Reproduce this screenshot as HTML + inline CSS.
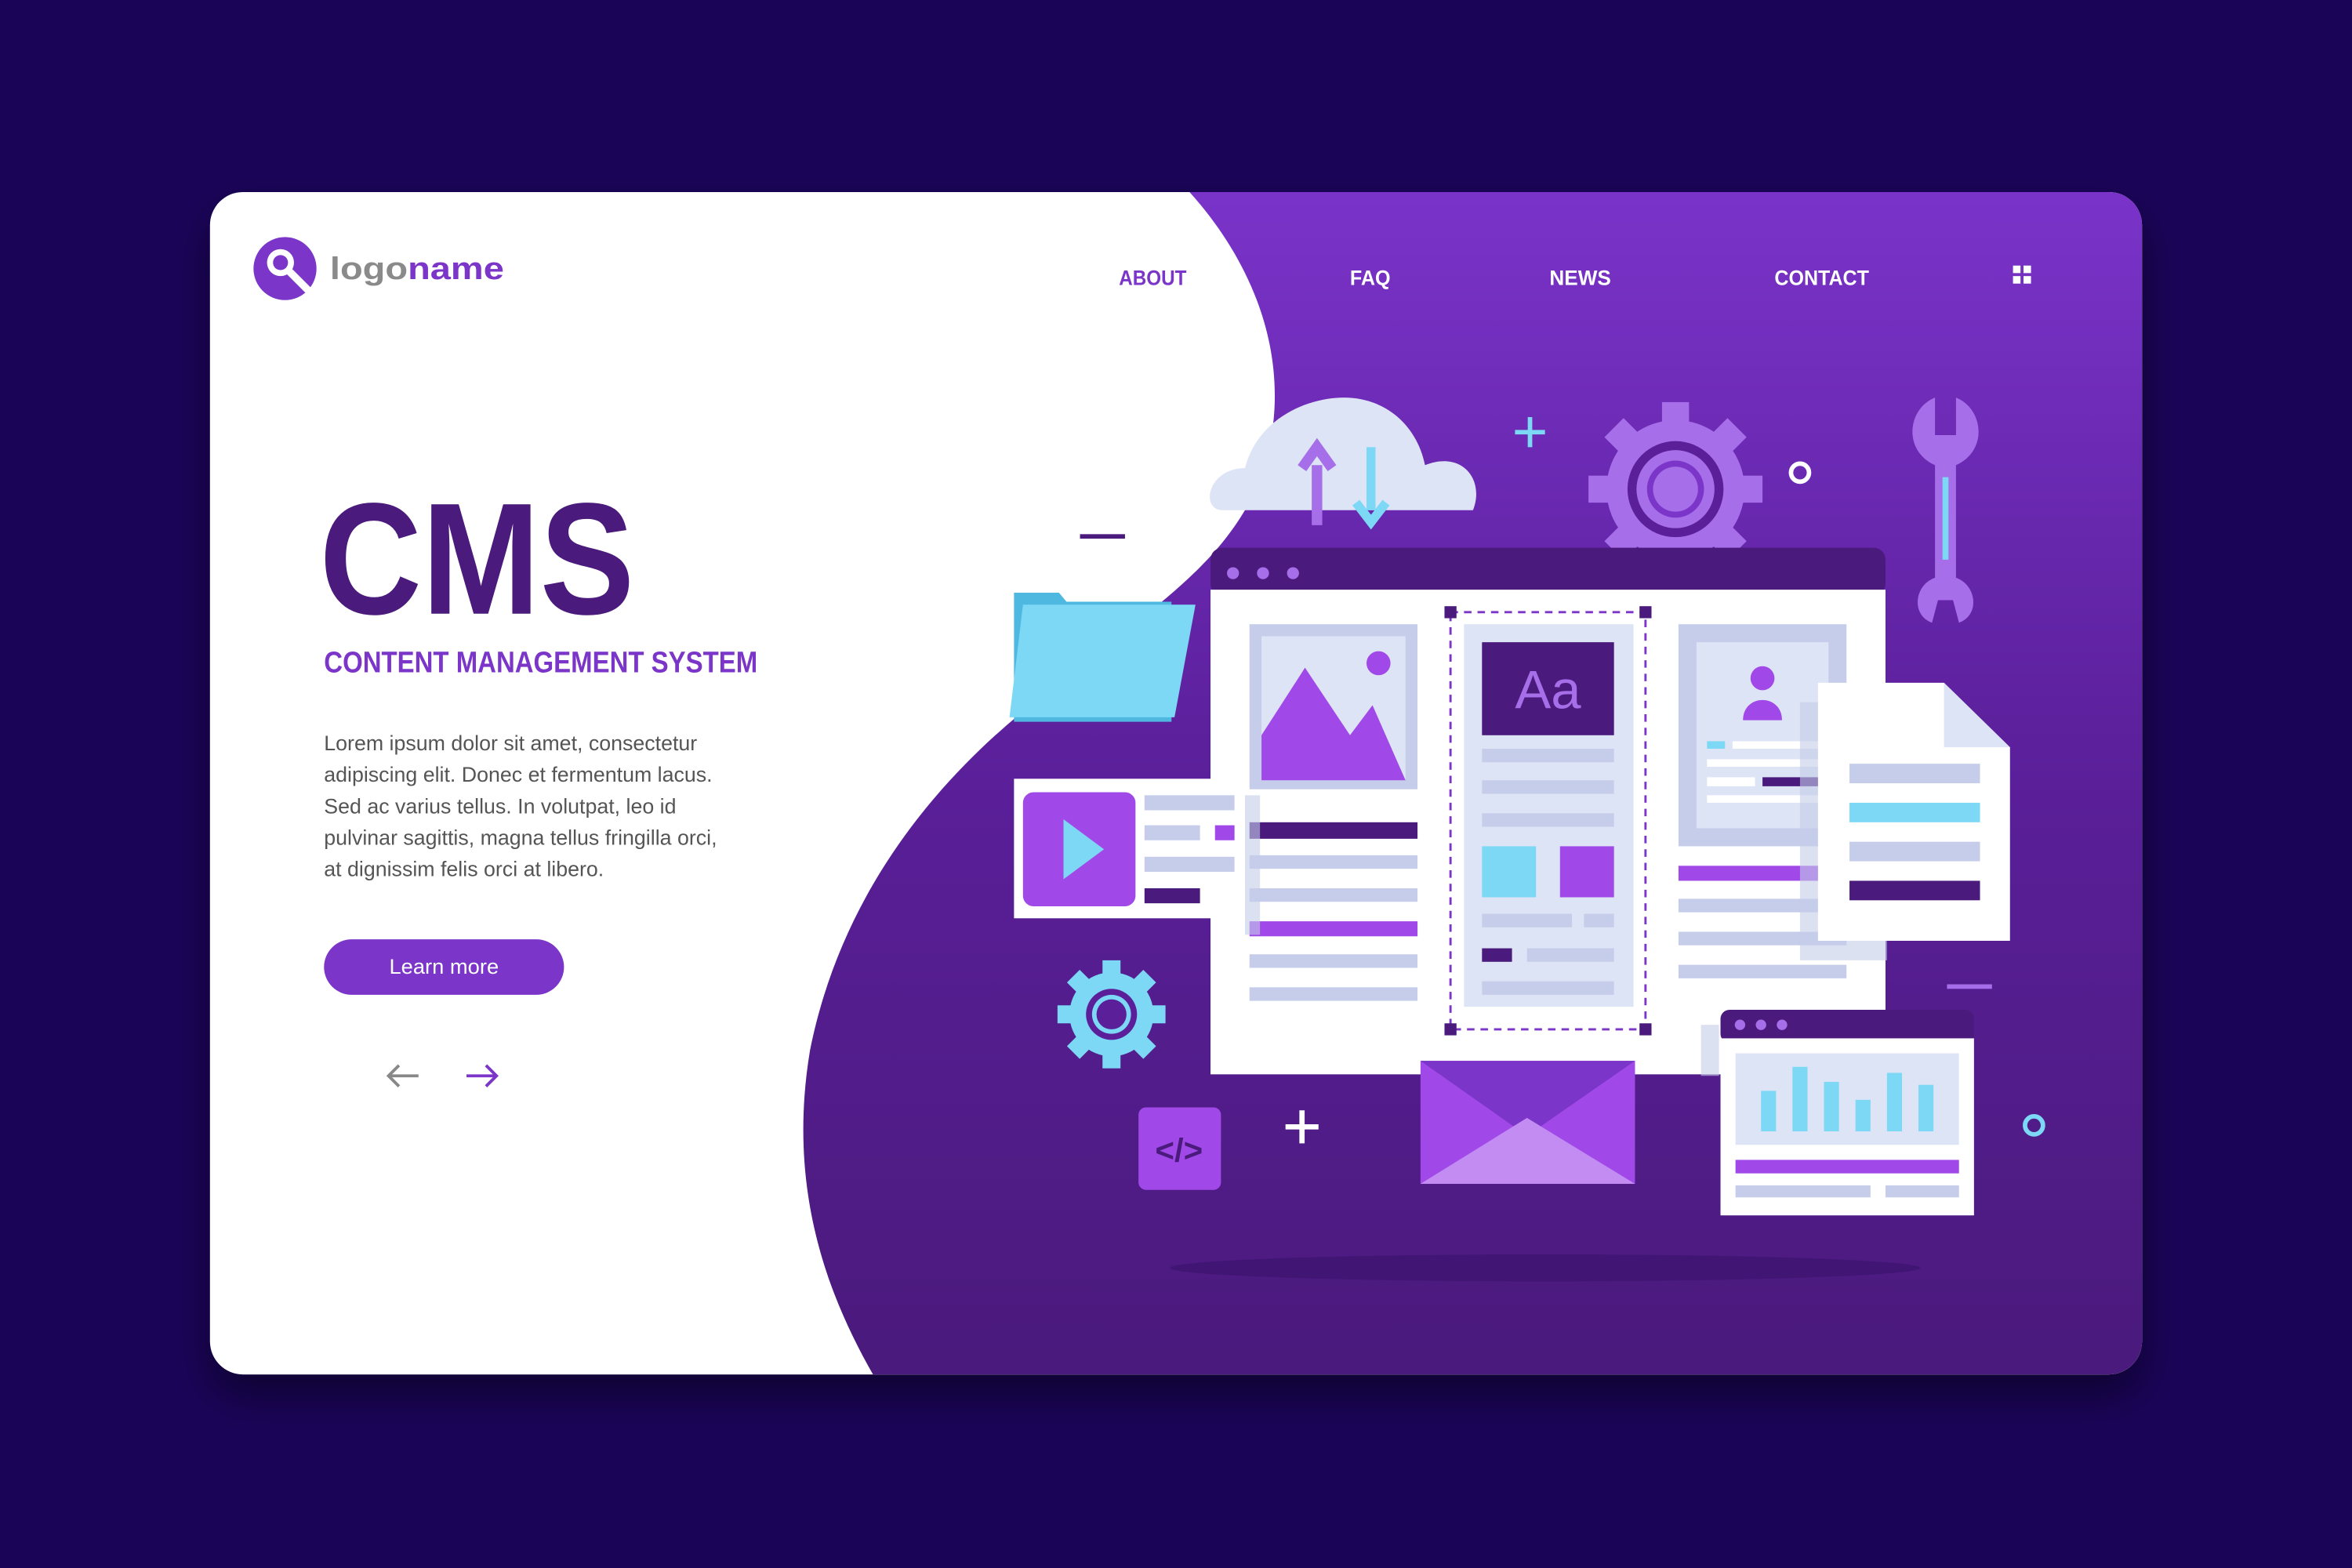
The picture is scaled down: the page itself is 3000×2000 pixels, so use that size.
<!DOCTYPE html>
<html><head><meta charset="utf-8"><style>
html,body{margin:0;padding:0;background:#1a0458;}
svg{display:block;width:3000px;height:2000px;}
text{font-family:"Liberation Sans",sans-serif;}
</style></head><body>
<svg viewBox="0 0 1568 1045" xmlns="http://www.w3.org/2000/svg" preserveAspectRatio="none">
<defs>
<linearGradient id="pg" x1="0" y1="0" x2="0" y2="1">
<stop offset="0" stop-color="#7a33c9"/><stop offset="0.5" stop-color="#5a1f99"/><stop offset="1" stop-color="#4a1a7c"/></linearGradient>
<clipPath id="card"><rect x="140" y="128" width="1288" height="788" rx="22"/></clipPath>
<filter id="sh" x="-10%" y="-10%" width="120%" height="130%"><feDropShadow dx="0" dy="14" stdDeviation="14" flood-color="#000" flood-opacity="0.45"/></filter>
</defs>
<rect width="1568" height="1045" fill="#1a0458"/>
<rect x="140" y="128" width="1288" height="788" rx="22" fill="#fff" filter="url(#sh)"/>
<g clip-path="url(#card)">
<path d="M793,128 C840,180 865,250 840,320 C815,380 760,410 700,460 C620,520 560,600 540,700 C525,790 550,860 582,916 L1428,916 L1428,128 Z" fill="url(#pg)"/>
<ellipse cx="1030" cy="845" rx="250" ry="9" fill="#3e1470" opacity="0.8"/>
</g>
<!-- logo -->
<circle cx="190" cy="179" r="21" fill="#7b35c8"/>
<circle cx="187" cy="175" r="9" fill="#fff"/>
<circle cx="187" cy="175" r="5" fill="#7b35c8"/>
<path d="M193,181 L205,193" stroke="#fff" stroke-width="5" stroke-linecap="round"/>
<text x="220" y="186" font-size="21" font-weight="bold" fill="#8a8a8a" textLength="116" lengthAdjust="spacingAndGlyphs">logo<tspan fill="#7b35c8">name</tspan></text>
<!-- nav -->
<text x="746" y="190" font-size="14" fill="#7b35c8" font-weight="bold" textLength="45" lengthAdjust="spacingAndGlyphs">ABOUT</text>
<text x="900" y="190" font-size="14" fill="#fff" font-weight="bold" textLength="27" lengthAdjust="spacingAndGlyphs">FAQ</text>
<text x="1033" y="190" font-size="14" fill="#fff" font-weight="bold" textLength="41" lengthAdjust="spacingAndGlyphs">NEWS</text>
<text x="1183" y="190" font-size="14" fill="#fff" font-weight="bold" textLength="63" lengthAdjust="spacingAndGlyphs">CONTACT</text>
<g fill="#fff"><rect x="1342" y="177" width="5" height="5"/><rect x="1349" y="177" width="5" height="5"/><rect x="1342" y="184" width="5" height="5"/><rect x="1349" y="184" width="5" height="5"/></g>
<!-- hero text -->
<text x="213" y="409" font-size="106" font-weight="bold" fill="#4a1a7c" textLength="210" lengthAdjust="spacingAndGlyphs">CMS</text>
<text x="216" y="448" font-size="20" font-weight="bold" fill="#7b35c8" textLength="289" lengthAdjust="spacingAndGlyphs">CONTENT MANAGEMENT SYSTEM</text>
<g font-size="14" fill="#555">
<text x="216" y="500">Lorem ipsum dolor sit amet, consectetur</text>
<text x="216" y="521">adipiscing elit. Donec et fermentum lacus.</text>
<text x="216" y="542">Sed ac varius tellus. In volutpat, leo id</text>
<text x="216" y="563">pulvinar sagittis, magna tellus fringilla orci,</text>
<text x="216" y="584">at dignissim felis orci at libero.</text>
</g>
<rect x="216" y="626" width="160" height="37" rx="18.5" fill="#7b35c8"/>
<text x="296" y="649" font-size="14" fill="#fff" text-anchor="middle" textLength="73" lengthAdjust="spacingAndGlyphs">Learn more</text>
<path d="M279,717 H259 M266,710 L259,717 L266,724" stroke="#888" stroke-width="2" fill="none"/>
<path d="M311,717 H331 M324,710 L331,717 L324,724" stroke="#7b35c8" stroke-width="2" fill="none"/>
<!-- cloud -->
<path d="M815,340 C800,340 805,312 830,312 C838,280 870,265 896,265 C925,265 945,285 950,310 C975,300 990,320 982,340 Z" fill="#dde4f5"/>
<path d="M878,350 V310 M868,312 L878,298 L888,312" stroke="#a66ee8" stroke-width="7" fill="none"/>
<path d="M914,298 V340 M904,335 L914,348 L924,335" stroke="#7dd8f5" stroke-width="6" fill="none"/>
<rect x="720" y="356" width="30" height="3" fill="#4a1a7c"/>
<path d="M1010,288 H1030 M1020,278 V298" stroke="#7dd8f5" stroke-width="3"/>
<circle cx="1200" cy="315" r="6" fill="none" stroke="#fff" stroke-width="3"/>
<!-- gear big -->
<g transform="translate(1117,326)" fill="#a66ee8">
<circle r="46"/>
<g id="t"><rect x="-9" y="-58" width="18" height="18"/></g>
<use href="#t" transform="rotate(45)"/><use href="#t" transform="rotate(90)"/><use href="#t" transform="rotate(135)"/><use href="#t" transform="rotate(180)"/><use href="#t" transform="rotate(225)"/><use href="#t" transform="rotate(270)"/><use href="#t" transform="rotate(315)"/>
<circle r="32" fill="#5a1f99"/><circle r="26" fill="#a66ee8"/><circle r="19" fill="#7b35c8"/><circle r="15" fill="#a66ee8"/>
</g>
<!-- wrench -->
<path d="M1290,265 C1272,272 1268,300 1290,310 L1290,385 C1276,390 1274,410 1288,415 L1292,400 H1302 L1306,415 C1320,410 1318,390 1304,385 L1304,310 C1326,300 1322,272 1304,265 L1304,290 H1290 Z" fill="#a66ee8"/>
<rect x="1295" y="318" width="4" height="55" fill="#7dd8f5"/>
<!-- folder -->
<path d="M676,395 h30 l5,6 h70 v80 h-105 z" fill="#4fb8e0"/>
<path d="M682,403 H797 L783,478 H673 Z" fill="#7dd8f5"/>
<!-- main browser -->
<rect x="807" y="365" width="450" height="32" rx="8" fill="#4a1a7c"/>
<circle cx="822" cy="382" r="4" fill="#a66ee8"/><circle cx="842" cy="382" r="4" fill="#a66ee8"/><circle cx="862" cy="382" r="4" fill="#a66ee8"/>
<rect x="807" y="393" width="450" height="323" fill="#fff"/>
<rect x="833" y="416" width="112" height="110" fill="#c5cdea"/>
<rect x="841" y="424" width="96" height="96" fill="#dde4f5"/>
<path d="M841,490 L870,445 L900,490 L915,470 L937,520 H841 Z" fill="#a049e8"/>
<circle cx="919" cy="442" r="8" fill="#a049e8"/>
<rect x="833" y="548" width="112" height="11" fill="#4a1a7c"/>
<rect x="833" y="570" width="112" height="9" fill="#c5cdea"/>
<rect x="833" y="592" width="112" height="9" fill="#c5cdea"/>
<rect x="833" y="614" width="112" height="10" fill="#a049e8"/>
<rect x="833" y="636" width="112" height="9" fill="#c5cdea"/>
<rect x="833" y="658" width="112" height="9" fill="#c5cdea"/>
<rect x="976" y="416" width="113" height="255" fill="#dde4f5"/>
<rect x="967" y="408" width="130" height="278" fill="none" stroke="#7b35c8" stroke-width="1.5" stroke-dasharray="5,4"/>
<g fill="#4a1a7c"><rect x="963" y="404" width="8" height="8"/><rect x="1093" y="404" width="8" height="8"/><rect x="963" y="682" width="8" height="8"/><rect x="1093" y="682" width="8" height="8"/></g>
<rect x="988" y="428" width="88" height="62" fill="#4a1a7c"/>
<text x="1032" y="472" font-size="36" fill="#a66ee8" text-anchor="middle">Aa</text>
<g fill="#c5cdea"><rect x="988" y="499" width="88" height="9"/><rect x="988" y="520" width="88" height="9"/><rect x="988" y="542" width="88" height="9"/><rect x="988" y="609" width="60" height="9"/><rect x="1056" y="609" width="20" height="9"/><rect x="1018" y="632" width="58" height="9"/><rect x="988" y="654" width="88" height="9"/></g>
<rect x="988" y="564" width="36" height="34" fill="#7dd8f5"/><rect x="1040" y="564" width="36" height="34" fill="#a049e8"/>
<rect x="988" y="632" width="20" height="9" fill="#4a1a7c"/>
<rect x="1119" y="416" width="112" height="148" fill="#c5cdea"/>
<rect x="1131" y="428" width="88" height="124" fill="#dde4f5"/>
<circle cx="1175" cy="452" r="8" fill="#a049e8"/><path d="M1162,480 C1162,462 1188,462 1188,480 Z" fill="#a049e8"/>
<rect x="1138" y="494" width="12" height="5" fill="#7dd8f5"/><rect x="1155" y="494" width="60" height="5" fill="#fff"/>
<rect x="1138" y="506" width="77" height="5" fill="#fff"/><rect x="1138" y="518" width="32" height="6" fill="#fff"/><rect x="1175" y="518" width="40" height="6" fill="#4a1a7c"/><rect x="1138" y="530" width="77" height="5" fill="#fff"/>
<rect x="1119" y="577" width="112" height="10" fill="#a049e8"/>
<g fill="#c5cdea"><rect x="1119" y="599" width="112" height="9"/><rect x="1119" y="621" width="112" height="9"/><rect x="1119" y="643" width="112" height="9"/></g>
<!-- document -->
<rect x="1200" y="468" width="58" height="172" fill="#c5cdea" opacity="0.6"/>
<path d="M1212,455 H1296 L1340,498 V627 H1212 Z" fill="#fff"/>
<path d="M1296,455 V498 H1340 Z" fill="#dde4f5"/>
<rect x="1233" y="509" width="87" height="13" fill="#c5cdea"/>
<rect x="1233" y="535" width="87" height="13" fill="#7dd8f5"/>
<rect x="1233" y="561" width="87" height="13" fill="#c5cdea"/>
<rect x="1233" y="587" width="87" height="13" fill="#4a1a7c"/>
<!-- video card -->
<rect x="676" y="519" width="154" height="93" fill="#fff"/>
<rect x="830" y="530" width="10" height="93" fill="#c5cdea" opacity="0.6"/>
<rect x="682" y="528" width="75" height="76" rx="7" fill="#a049e8"/>
<path d="M709,546 L736,566 L709,586 Z" fill="#7dd8f5"/>
<rect x="763" y="530" width="60" height="10" fill="#c5cdea"/>
<rect x="763" y="550" width="37" height="10" fill="#c5cdea"/><rect x="810" y="550" width="13" height="10" fill="#a049e8"/>
<rect x="763" y="571" width="60" height="10" fill="#c5cdea"/>
<rect x="763" y="592" width="37" height="10" fill="#4a1a7c"/>
<!-- small gear -->
<g transform="translate(741,676)" fill="#7dd8f5">
<circle r="28"/>
<g id="t2"><rect x="-6" y="-36" width="12" height="12"/></g>
<use href="#t2" transform="rotate(45)"/><use href="#t2" transform="rotate(90)"/><use href="#t2" transform="rotate(135)"/><use href="#t2" transform="rotate(180)"/><use href="#t2" transform="rotate(225)"/><use href="#t2" transform="rotate(270)"/><use href="#t2" transform="rotate(315)"/>
<circle r="17" fill="#5a1f99"/><circle r="13" fill="#7dd8f5"/><circle r="10" fill="#5a1f99"/>
</g>
<!-- code -->
<rect x="759" y="738" width="55" height="55" rx="5" fill="#a049e8"/>
<text x="786" y="774" font-size="22" font-weight="bold" fill="#4a1a7c" text-anchor="middle">&lt;/&gt;</text>
<path d="M857,751 H879 M868,740 V762" stroke="#fff" stroke-width="3.5"/>
<!-- envelope -->
<rect x="947" y="707" width="143" height="82" fill="#a049e8"/>
<path d="M947,707 L1018,757 L1090,707 Z" fill="#7b35c8"/>
<path d="M947,789 L1018,745 L1090,789 Z" fill="#c28cf2"/>
<!-- chart window -->
<rect x="1134" y="683" width="12" height="34" fill="#c5cdea" opacity="0.6"/>
<rect x="1147" y="673" width="169" height="22" rx="6" fill="#4a1a7c"/>
<circle cx="1160" cy="683" r="3.5" fill="#a66ee8"/><circle cx="1174" cy="683" r="3.5" fill="#a66ee8"/><circle cx="1188" cy="683" r="3.5" fill="#a66ee8"/>
<rect x="1147" y="692" width="169" height="118" fill="#fff"/>
<rect x="1157" y="702" width="149" height="61" fill="#dde4f5"/>
<g fill="#7dd8f5"><rect x="1174" y="727" width="10" height="27"/><rect x="1195" y="711" width="10" height="43"/><rect x="1216" y="721" width="10" height="33"/><rect x="1237" y="733" width="10" height="21"/><rect x="1258" y="715" width="10" height="39"/><rect x="1279" y="723" width="10" height="31"/></g>
<rect x="1157" y="773" width="149" height="9" fill="#a049e8"/>
<rect x="1157" y="790" width="90" height="8" fill="#c5cdea"/><rect x="1257" y="790" width="49" height="8" fill="#c5cdea"/>
<rect x="1298" y="656" width="30" height="3" fill="#a66ee8"/>
<circle cx="1356" cy="750" r="6" fill="none" stroke="#7dd8f5" stroke-width="3"/>
</svg>
</body></html>
